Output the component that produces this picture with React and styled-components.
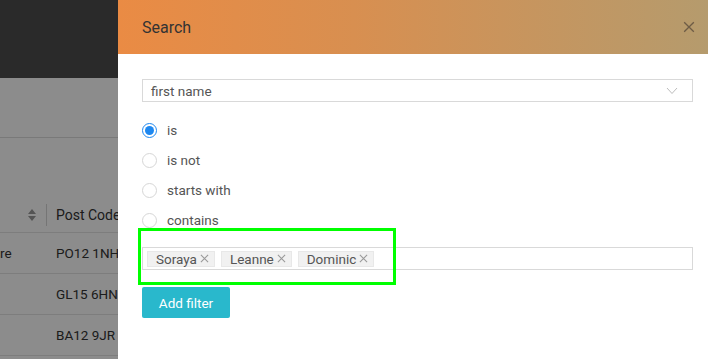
import React from 'react'
import styled, { createGlobalStyle } from 'styled-components'

const Global = createGlobalStyle`
    html, body {
        margin: 0;
        padding: 0;
        width: 708px;
        height: 359px;
        overflow: hidden;
        font-family: Roboto, "Liberation Sans", sans-serif;
    }
    * { box-sizing: border-box; }
`

const Page = styled.div`
    position: relative;
    width: 708px;
    height: 359px;
    background: #fff;
    overflow: hidden;
`

const TopBar = styled.header`
    height: 78px;
    background: #4d4d4d;
`

const Toolbar = styled.div`
    height: 60px;
    border-bottom: 1px solid #dcdcdc;
`

const TableWrap = styled.div`
    margin-top: 60px;
`

const HeadRow = styled.div`
    display: flex;
    align-items: center;
    height: 35px;
    border-bottom: 1px solid #e4e4e4;
`

const HeadCell = styled.div`
    display: flex;
    align-items: center;
    justify-content: flex-end;
    width: 47px;
    height: 22px;
    padding-right: 10px;
    border-right: 1px solid #d6d6d6;
`

const HeadLabel = styled.div`
    padding-left: 9px;
    font-size: 14px;
    color: #333;
    white-space: nowrap;
`

const Row = styled.div`
    display: flex;
    align-items: center;
    height: 41px;
    border-bottom: 1px solid #e4e4e4;
    font-size: 13.5px;
    color: #333;
`

const Cell = styled.div`
    width: ${p => p.w}px;
    white-space: nowrap;
`

const Dim = styled.div`
    position: absolute;
    inset: 0;
    background: rgba(0, 0, 0, 0.45);
`

const Drawer = styled.aside`
    position: absolute;
    top: 0;
    right: 0;
    width: 590px;
    height: 359px;
    background: #fff;
`

const DrawerHead = styled.div`
    display: flex;
    align-items: center;
    justify-content: space-between;
    height: 54px;
    padding: 0 13px 0 24px;
    background: linear-gradient(90deg, #ea8b44 0%, #d88f50 40%, #b59b6d 100%);
`

const Title = styled.h2`
    margin: 0;
    font-size: 16px;
    font-weight: 400;
    color: #333;
`

const Close = styled.button`
    display: flex;
    padding: 0;
    border: 0;
    background: none;
    color: #6e5c46;
`

const Body = styled.div`
    padding: 25px 15px 0 24px;
`

const Select = styled.div`
    display: flex;
    align-items: center;
    justify-content: space-between;
    height: 23px;
    padding: 0 14px 0 8px;
    border: 1px solid #d9d9d9;
    font-size: 13.5px;
    color: #555;
`

const Radios = styled.div`
    display: flex;
    flex-direction: column;
    margin-top: 13px;
`

const RadioRow = styled.label`
    display: flex;
    align-items: center;
    gap: 10px;
    height: 30px;
    font-size: 13.5px;
    color: #555;
`

const Dot = styled.span`
    display: flex;
    align-items: center;
    justify-content: center;
    width: 15px;
    height: 15px;
    border-radius: 50%;
    border: 1px solid ${p => (p.on ? '#1e88f0' : '#d6d6d6')};
    background: #fff;

    &::after {
        content: '';
        display: ${p => (p.on ? 'block' : 'none')};
        width: 9px;
        height: 9px;
        border-radius: 50%;
        background: #1e88f0;
    }
`

const TagBox = styled.div`
    display: flex;
    align-items: center;
    gap: 6px;
    height: 23px;
    margin-top: 12px;
    padding: 0 4px;
    border: 1px solid #d9d9d9;
`

const Tag = styled.span`
    display: flex;
    align-items: center;
    gap: 3px;
    height: 16px;
    padding: 0 5px 0 8px;
    background: #f1f1f1;
    border: 1px solid #e8e8e8;
    font-size: 13.5px;
    color: #555;
`

const TagX = styled.span`
    display: flex;
    color: #999;
`

const AddButton = styled.button`
    margin-top: 17px;
    width: 88px;
    height: 31px;
    border: 0;
    border-radius: 2px;
    background: #29b8cc;
    color: #fff;
    font-family: inherit;
    font-size: 13.5px;
`

const Highlight = styled.div`
    position: absolute;
    left: 138px;
    top: 228px;
    width: 258px;
    height: 57px;
    border: 3px solid #00ff00;
    pointer-events: none;
`

const Cross = ({ size, w = 1.3 }) => (
    <svg width={size} height={size} viewBox="0 0 10 10" fill="none" stroke="currentColor" strokeWidth={w}>
        <path d="M1 1 L9 9 M9 1 L1 9" />
    </svg>
)

const Chevron = () => (
    <svg width="12" height="8" viewBox="0 0 12 8" fill="none" stroke="#bdbdbd" strokeWidth="1">
        <path d="M1 1 L6 6.5 L11 1" />
    </svg>
)

const SortIcon = () => (
    <svg width="8" height="12" viewBox="0 0 8 12" fill="#999">
        <path d="M4 0 L8 5 H0 Z M0 7 H8 L4 12 Z" />
    </svg>
)

const rows = [
    ['re', 'PO12 1NH'],
    ['', 'GL15 6HN'],
    ['', 'BA12 9JR'],
]

const options = ['is', 'is not', 'starts with', 'contains']
const tags = ['Soraya', 'Leanne', 'Dominic']

const App = () => (
    <Page>
        <Global />
        <TopBar />
        <Toolbar />
        <TableWrap>
            <HeadRow>
                <HeadCell><SortIcon /></HeadCell>
                <HeadLabel>Post Code</HeadLabel>
            </HeadRow>
            {rows.map((r, i) => (
                <Row key={i}>
                    <Cell w={56}>{r[0]}</Cell>
                    <Cell w={100}>{r[1]}</Cell>
                </Row>
            ))}
        </TableWrap>
        <Dim />
        <Drawer>
            <DrawerHead>
                <Title>Search</Title>
                <Close><Cross size={12} w={1.1} /></Close>
            </DrawerHead>
            <Body>
                <Select>
                    <span>first name</span>
                    <Chevron />
                </Select>
                <Radios>
                    {options.map((o, i) => (
                        <RadioRow key={o}>
                            <Dot on={i === 0} />
                            {o}
                        </RadioRow>
                    ))}
                </Radios>
                <TagBox>
                    {tags.map(t => (
                        <Tag key={t}>
                            {t}
                            <TagX><Cross size={9} w={1.2} /></TagX>
                        </Tag>
                    ))}
                </TagBox>
                <AddButton>Add filter</AddButton>
            </Body>
        </Drawer>
        <Highlight />
    </Page>
)

export default App
